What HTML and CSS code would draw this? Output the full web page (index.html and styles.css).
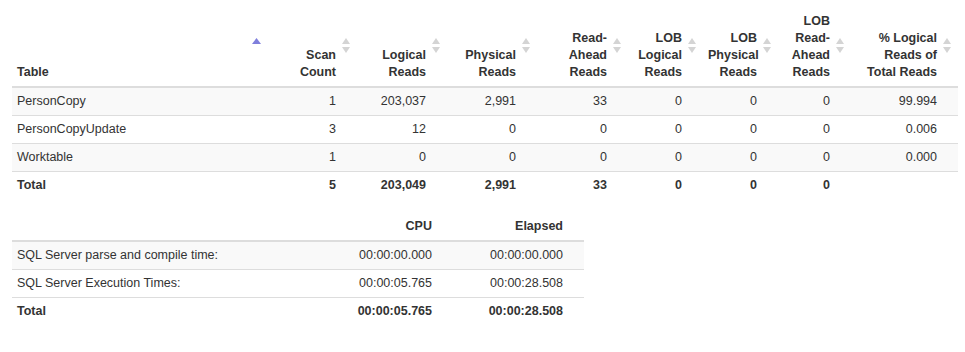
FILE: index.html
```html
<!DOCTYPE html>
<html>
<head>
<meta charset="utf-8">
<link rel="stylesheet" href="styles.css">
</head>
<body>
<table class="grid io">
  <colgroup>
    <col class="c-name"><col class="c90"><col class="c90"><col class="c90"><col class="c91"><col class="c75"><col class="c75"><col class="c73"><col class="c107">
  </colgroup>
  <thead>
    <tr>
      <th class="left">Table<svg class="sort" width="9" height="7" viewBox="0 0 9 7"><polygon points="0,6 4.5,0 9,6" fill="#7f7fdc"/></svg></th>
      <th>Scan<br>Count<svg class="sort" width="8" height="15" viewBox="0 0 8 15"><polygon points="0,6 4,0 8,6" fill="#d4d4d4"/><polygon points="0,9 4,15 8,9" fill="#d4d4d4"/></svg></th>
      <th>Logical<br>Reads<svg class="sort" width="8" height="15" viewBox="0 0 8 15"><polygon points="0,6 4,0 8,6" fill="#d4d4d4"/><polygon points="0,9 4,15 8,9" fill="#d4d4d4"/></svg></th>
      <th>Physical<br>Reads<svg class="sort" width="8" height="15" viewBox="0 0 8 15"><polygon points="0,6 4,0 8,6" fill="#d4d4d4"/><polygon points="0,9 4,15 8,9" fill="#d4d4d4"/></svg></th>
      <th>Read-<br>Ahead<br>Reads<svg class="sort" width="8" height="15" viewBox="0 0 8 15"><polygon points="0,6 4,0 8,6" fill="#d4d4d4"/><polygon points="0,9 4,15 8,9" fill="#d4d4d4"/></svg></th>
      <th>LOB<br>Logical<br>Reads<svg class="sort" width="8" height="15" viewBox="0 0 8 15"><polygon points="0,6 4,0 8,6" fill="#d4d4d4"/><polygon points="0,9 4,15 8,9" fill="#d4d4d4"/></svg></th>
      <th>LOB<br>Physical<br>Reads<svg class="sort" width="8" height="15" viewBox="0 0 8 15"><polygon points="0,6 4,0 8,6" fill="#d4d4d4"/><polygon points="0,9 4,15 8,9" fill="#d4d4d4"/></svg></th>
      <th>LOB<br>Read-<br>Ahead<br>Reads<svg class="sort" width="8" height="15" viewBox="0 0 8 15"><polygon points="0,6 4,0 8,6" fill="#d4d4d4"/><polygon points="0,9 4,15 8,9" fill="#d4d4d4"/></svg></th>
      <th>% Logical<br>Reads of<br>Total Reads<svg class="sort" width="8" height="15" viewBox="0 0 8 15"><polygon points="0,6 4,0 8,6" fill="#d4d4d4"/><polygon points="0,9 4,15 8,9" fill="#d4d4d4"/></svg></th>
    </tr>
  </thead>
  <tbody>
    <tr><td class="left">PersonCopy</td><td>1</td><td>203,037</td><td>2,991</td><td>33</td><td>0</td><td>0</td><td>0</td><td>99.994</td></tr>
    <tr><td class="left">PersonCopyUpdate</td><td>3</td><td>12</td><td>0</td><td>0</td><td>0</td><td>0</td><td>0</td><td>0.006</td></tr>
    <tr><td class="left">Worktable</td><td>1</td><td>0</td><td>0</td><td>0</td><td>0</td><td>0</td><td>0</td><td>0.000</td></tr>
  </tbody>
  <tfoot>
    <tr><td class="left">Total</td><td>5</td><td>203,049</td><td>2,991</td><td>33</td><td>0</td><td>0</td><td>0</td><td></td></tr>
  </tfoot>
</table>

<table class="grid time">
  <colgroup>
    <col class="t-name"><col class="t-cpu"><col class="t-el">
  </colgroup>
  <thead>
    <tr><th class="left"></th><th>CPU</th><th>Elapsed</th></tr>
  </thead>
  <tbody>
    <tr><td class="left">SQL Server parse and compile time:</td><td>00:00:00.000</td><td>00:00:00.000</td></tr>
    <tr><td class="left">SQL Server Execution Times:</td><td>00:00:05.765</td><td>00:00:28.508</td></tr>
  </tbody>
  <tfoot>
    <tr><td class="left">Total</td><td>00:00:05.765</td><td>00:00:28.508</td></tr>
  </tfoot>
</table>
</body>
</html>
```

FILE: styles.css
```css
html, body {
  background: #fff;
}
body {
  margin: 8px 0 0 12px;
  font-family: "Liberation Sans", Arial, sans-serif;
  font-size: 12.5px;
  line-height: 17px;
  color: #333;
}
.grid {
  border-collapse: collapse;
  border-spacing: 0;
  table-layout: fixed;
}
.io {
  width: 946px;
  margin-bottom: 14px;
}
.time {
  width: 572px;
}
.c-name { width: 255px; }
.c90 { width: 90px; }
.c91 { width: 91px; }
.c75 { width: 75px; }
.c73 { width: 73px; }
.c107 { width: 107px; }
.t-name { width: 321px; }
.t-cpu { width: 120px; }
.t-el { width: 131px; }

.grid th, .grid td {
  padding: 5px 21px 5px 5px;
  text-align: right;
  white-space: nowrap;
}
.grid th {
  position: relative;
  vertical-align: bottom;
  font-weight: bold;
  border-bottom: 2px solid #ddd;
}
.grid .left {
  text-align: left;
}
.grid tbody td {
  border-bottom: 1px solid #ddd;
}
.grid tbody tr:nth-child(odd) td {
  background: #f9f9f9;
}
.grid tfoot td {
  font-weight: bold;
}
.sort {
  position: absolute;
  top: 30px;
  right: 7px;
  display: block;
}
.io th:first-child .sort {
  right: 6px;
}
```
